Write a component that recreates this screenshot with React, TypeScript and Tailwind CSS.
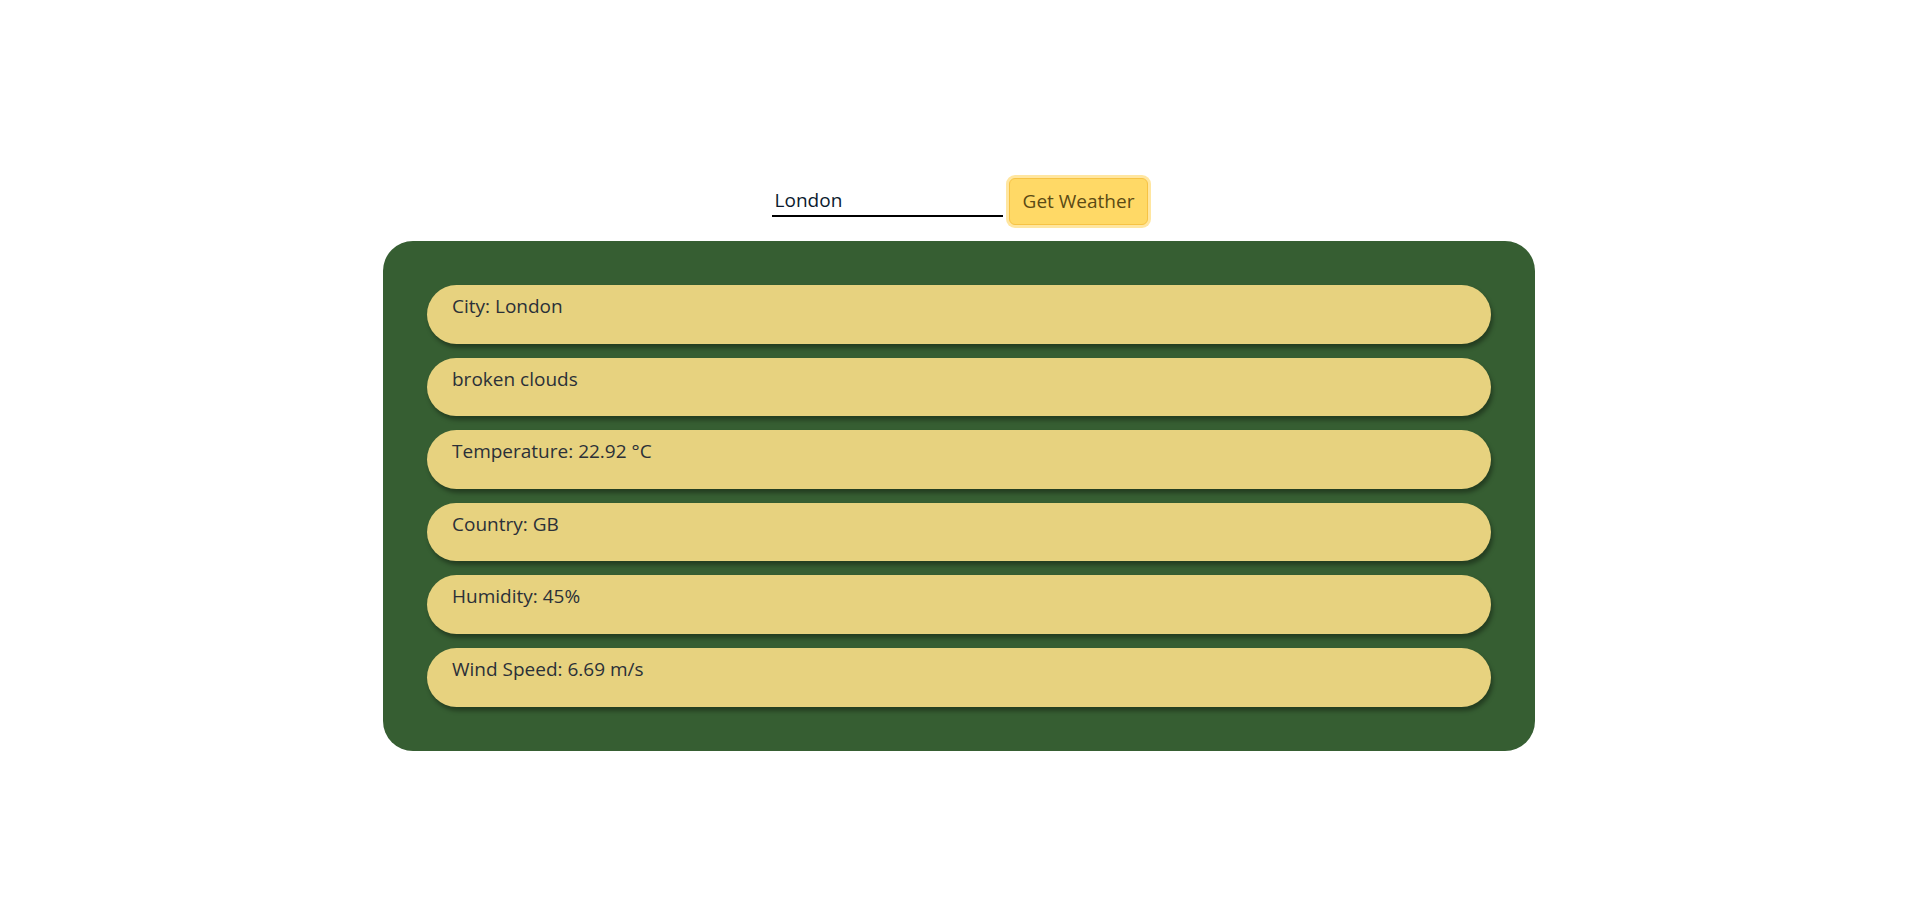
import { useState } from "react";

const weather = {
  city: "London",
  description: "broken clouds",
  temp: 22.92,
  country: "GB",
  humidity: 45,
  wind: 6.69,
};

export default function App() {
  const [city, setCity] = useState("London");

  const rows = [
    `City: ${weather.city}`,
    weather.description,
    `Temperature: ${weather.temp} °C`,
    `Country: ${weather.country}`,
    `Humidity: ${weather.humidity}%`,
    `Wind Speed: ${weather.wind} m/s`,
  ];

  return (
    <div className="min-h-screen bg-white font-['Open_Sans',sans-serif] pt-[175px]">
      {/* Search */}
      <div className="flex items-center justify-center pl-[5px]">
        <input
          value={city}
          onChange={(e) => setCity(e.target.value)}
          className="w-[231px] pl-[3px] pb-[2px] text-[19px] leading-[26px] text-[#0b1a2e] border-b-2 border-black outline-none"
        />
        <button className="ml-[3px] h-[53px] px-[3px] rounded-[9px] bg-[#ffe6a0]">
          <span className="flex items-center h-[47px] px-[13px] rounded-[6px] bg-[#ffd966] border border-[#f7c344] text-[19px] text-[#5b4a14]">
            Get Weather
          </span>
        </button>
      </div>

      {/* Result */}
      <div className="mx-auto mt-[13px] w-[1152px] rounded-[30px] bg-[#365e32] p-[44px] flex flex-col gap-[14px]">
        {rows.map((r) => (
          <div
            key={r}
            className="h-[58.6px] rounded-[30px] bg-[#e7d27f] px-[25px] pt-[7px] text-[19px] leading-[28px] text-[#2b3038] shadow-[2px_4px_4px_rgba(0,0,0,0.35)]"
          >
            {r}
          </div>
        ))}
      </div>
    </div>
  );
}
